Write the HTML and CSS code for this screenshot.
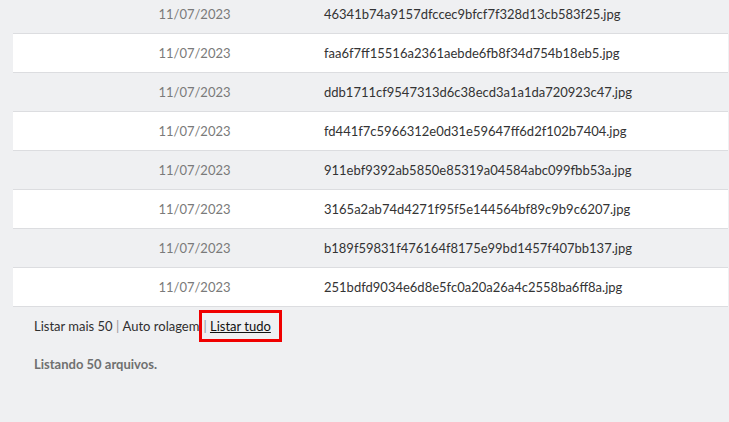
FILE: index.html
```html
<!DOCTYPE html>
<html lang="pt">
<head>
<meta charset="utf-8">
<link rel="stylesheet" href="styles.css">
</head>
<body>
<div class="page">
  <div class="list">
    <div class="row odd"><div class="c-sel"></div><div class="c-date">11/07/2023</div><div class="c-name">46341b74a9157dfccec9bfcf7f328d13cb583f25.jpg</div></div>
    <div class="row even"><div class="c-sel"></div><div class="c-date">11/07/2023</div><div class="c-name">faa6f7ff15516a2361aebde6fb8f34d754b18eb5.jpg</div></div>
    <div class="row odd"><div class="c-sel"></div><div class="c-date">11/07/2023</div><div class="c-name">ddb1711cf9547313d6c38ecd3a1a1da720923c47.jpg</div></div>
    <div class="row even"><div class="c-sel"></div><div class="c-date">11/07/2023</div><div class="c-name">fd441f7c5966312e0d31e59647ff6d2f102b7404.jpg</div></div>
    <div class="row odd"><div class="c-sel"></div><div class="c-date">11/07/2023</div><div class="c-name">911ebf9392ab5850e85319a04584abc099fbb53a.jpg</div></div>
    <div class="row even"><div class="c-sel"></div><div class="c-date">11/07/2023</div><div class="c-name">3165a2ab74d4271f95f5e144564bf89c9b9c6207.jpg</div></div>
    <div class="row odd"><div class="c-sel"></div><div class="c-date">11/07/2023</div><div class="c-name">b189f59831f476164f8175e99bd1457f407bb137.jpg</div></div>
    <div class="row even"><div class="c-sel"></div><div class="c-date">11/07/2023</div><div class="c-name">251bdfd9034e6d8e5fc0a20a26a4c2558ba6ff8a.jpg</div></div>
  </div>
  <div class="footer">
    <div class="actions"><span class="act">Listar mais 50</span><span class="sep"> | </span><span class="act">Auto rolagem</span><span class="hl"><span class="sep">|</span> <a class="all" href="#">Listar tudo</a></span></div>
    <div class="count">Listando 50 arquivos.</div>
  </div>
</div>
</body>
</html>
```
FILE: styles.css
```css
html, body {
  margin: 0;
  padding: 0;
  background: #eff0f2;
  font-family: Lato, "Open Sans", sans-serif;
  font-size: 13px;
  overflow: hidden;
}
.page {
  padding: 0 1px 0 13px;
}
.list {
  margin-top: -5px;
}
.row {
  display: grid;
  grid-template-columns: 59px 245px 1fr;
  height: 38px;
  align-items: center;
  border-bottom: 1px solid #dcdde0;
}
.row.even {
  background: #ffffff;
}
.c-date {
  text-align: center;
  color: #7a7a7a;
}
.c-name {
  padding-left: 7px;
  color: #333;
}
.footer {
  padding-left: 21px;
}
.actions {
  display: flex;
  align-items: center;
  height: 38px;
  color: #2f2f2f;
  white-space: pre;
}
.sep {
  color: #999;
}
.hl {
  border: 3px solid #f00000;
  padding: 5px 8px 5px 1px;
  margin-left: 0;
  line-height: 16px;
}
.all {
  color: #111;
  text-decoration: underline;
}
.count {
  margin-top: 11px;
  font-weight: bold;
  color: #707070;
}
```
